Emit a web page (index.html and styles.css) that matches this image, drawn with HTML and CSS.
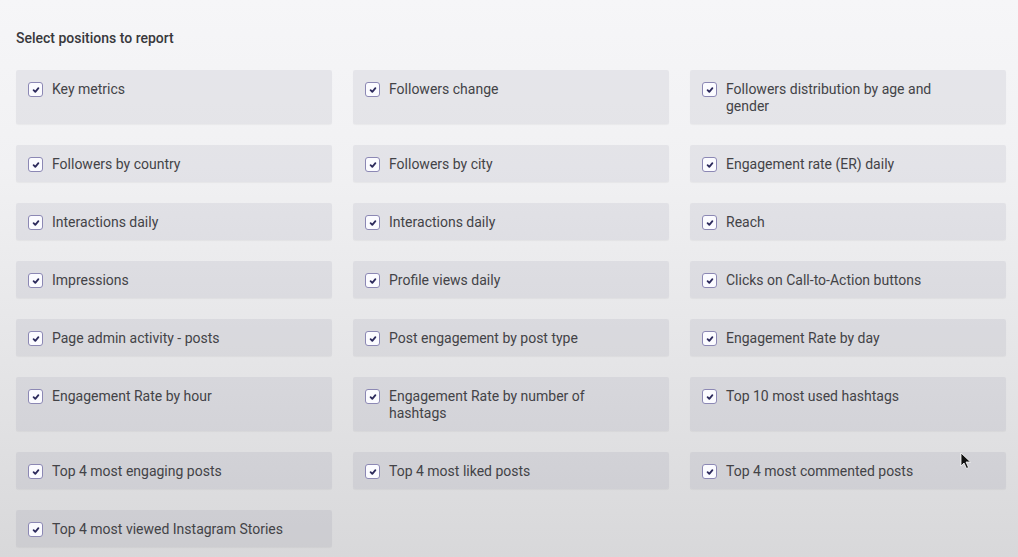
FILE: index.html
```html
<!DOCTYPE html>
<html>
<head>
<meta charset="utf-8">
<link rel="stylesheet" href="styles.css">
</head>
<body>
<div class="page">
  <h2 class="title">Select positions to report</h2>
  <div class="grid">
    <label class="item"><span class="box"><svg viewBox="0 0 10 10"><path d="M2.6 5.2 L4.3 6.9 L7.4 3.2"/></svg></span><span class="txt">Key metrics</span></label>
    <label class="item"><span class="box"><svg viewBox="0 0 10 10"><path d="M2.6 5.2 L4.3 6.9 L7.4 3.2"/></svg></span><span class="txt">Followers change</span></label>
    <label class="item"><span class="box"><svg viewBox="0 0 10 10"><path d="M2.6 5.2 L4.3 6.9 L7.4 3.2"/></svg></span><span class="txt">Followers distribution by age and gender</span></label>
    <label class="item"><span class="box"><svg viewBox="0 0 10 10"><path d="M2.6 5.2 L4.3 6.9 L7.4 3.2"/></svg></span><span class="txt">Followers by country</span></label>
    <label class="item"><span class="box"><svg viewBox="0 0 10 10"><path d="M2.6 5.2 L4.3 6.9 L7.4 3.2"/></svg></span><span class="txt">Followers by city</span></label>
    <label class="item"><span class="box"><svg viewBox="0 0 10 10"><path d="M2.6 5.2 L4.3 6.9 L7.4 3.2"/></svg></span><span class="txt">Engagement rate (ER) daily</span></label>
    <label class="item"><span class="box"><svg viewBox="0 0 10 10"><path d="M2.6 5.2 L4.3 6.9 L7.4 3.2"/></svg></span><span class="txt">Interactions daily</span></label>
    <label class="item"><span class="box"><svg viewBox="0 0 10 10"><path d="M2.6 5.2 L4.3 6.9 L7.4 3.2"/></svg></span><span class="txt">Interactions daily</span></label>
    <label class="item"><span class="box"><svg viewBox="0 0 10 10"><path d="M2.6 5.2 L4.3 6.9 L7.4 3.2"/></svg></span><span class="txt">Reach</span></label>
    <label class="item"><span class="box"><svg viewBox="0 0 10 10"><path d="M2.6 5.2 L4.3 6.9 L7.4 3.2"/></svg></span><span class="txt">Impressions</span></label>
    <label class="item"><span class="box"><svg viewBox="0 0 10 10"><path d="M2.6 5.2 L4.3 6.9 L7.4 3.2"/></svg></span><span class="txt">Profile views daily</span></label>
    <label class="item"><span class="box"><svg viewBox="0 0 10 10"><path d="M2.6 5.2 L4.3 6.9 L7.4 3.2"/></svg></span><span class="txt">Clicks on Call-to-Action buttons</span></label>
    <label class="item"><span class="box"><svg viewBox="0 0 10 10"><path d="M2.6 5.2 L4.3 6.9 L7.4 3.2"/></svg></span><span class="txt">Page admin activity - posts</span></label>
    <label class="item"><span class="box"><svg viewBox="0 0 10 10"><path d="M2.6 5.2 L4.3 6.9 L7.4 3.2"/></svg></span><span class="txt">Post engagement by post type</span></label>
    <label class="item"><span class="box"><svg viewBox="0 0 10 10"><path d="M2.6 5.2 L4.3 6.9 L7.4 3.2"/></svg></span><span class="txt">Engagement Rate by day</span></label>
    <label class="item"><span class="box"><svg viewBox="0 0 10 10"><path d="M2.6 5.2 L4.3 6.9 L7.4 3.2"/></svg></span><span class="txt">Engagement Rate by hour</span></label>
    <label class="item"><span class="box"><svg viewBox="0 0 10 10"><path d="M2.6 5.2 L4.3 6.9 L7.4 3.2"/></svg></span><span class="txt">Engagement Rate by number of hashtags</span></label>
    <label class="item"><span class="box"><svg viewBox="0 0 10 10"><path d="M2.6 5.2 L4.3 6.9 L7.4 3.2"/></svg></span><span class="txt">Top 10 most used hashtags</span></label>
    <label class="item"><span class="box"><svg viewBox="0 0 10 10"><path d="M2.6 5.2 L4.3 6.9 L7.4 3.2"/></svg></span><span class="txt">Top 4 most engaging posts</span></label>
    <label class="item"><span class="box"><svg viewBox="0 0 10 10"><path d="M2.6 5.2 L4.3 6.9 L7.4 3.2"/></svg></span><span class="txt">Top 4 most liked posts</span></label>
    <label class="item"><span class="box"><svg viewBox="0 0 10 10"><path d="M2.6 5.2 L4.3 6.9 L7.4 3.2"/></svg></span><span class="txt">Top 4 most commented posts</span></label>
    <label class="item"><span class="box"><svg viewBox="0 0 10 10"><path d="M2.6 5.2 L4.3 6.9 L7.4 3.2"/></svg></span><span class="txt">Top 4 most viewed Instagram Stories</span></label>
  </div>
</div>
<svg class="cursor" viewBox="0 0 12 18" width="12" height="18"><path d="M1 1 L1 14 L4 11 L6.5 16.5 L8.5 15.5 L6 10 L10.5 10 Z" fill="#111" stroke="#fff" stroke-width="0.8"/></svg>
</body>
</html>
```
FILE: styles.css
```css
html, body {
  margin: 0;
  padding: 0;
  height: 100%;
}
body {
  background: linear-gradient(to bottom, #f6f6f8 0%, #f1f1f3 30%, #e5e5e7 65%, #d8d8da 100%);
  font-family: Roboto, "Liberation Sans", Arial, sans-serif;
  overflow: hidden;
  position: relative;
}
.page {
  padding: 29px 12px 0 16px;
}
.title {
  margin: 0 0 23px 0;
  font-size: 14px;
  font-weight: 500;
  color: #38383c;
  line-height: 18px;
}
.grid {
  display: grid;
  grid-template-columns: 316px 316px 316px;
  column-gap: 21px;
  row-gap: 21px;
}
.item {
  display: flex;
  align-items: flex-start;
  background: rgba(70, 60, 100, 0.08);
  border-radius: 2px;
  box-shadow: 0 1px 1px rgba(0,0,0,0.04);
  padding: 11px 36px 9px 12px;
  color: #434347;
  font-size: 14px;
  line-height: 17px;
}
.box {
  flex: none;
  width: 13px;
  height: 13px;
  margin-top: 1px;
  margin-right: 9px;
  border: 1px solid #8c88b4;
  border-radius: 3px;
  background: #fbfbff;
  display: flex;
  align-items: center;
  justify-content: center;
}
.box svg {
  width: 10px;
  height: 10px;
}
.box path {
  fill: none;
  stroke: #2c2a5c;
  stroke-width: 1.8;
  stroke-linecap: round;
  stroke-linejoin: round;
}
.txt {
  display: block;
}
.cursor {
  position: absolute;
  left: 960px;
  top: 452px;
}
```
